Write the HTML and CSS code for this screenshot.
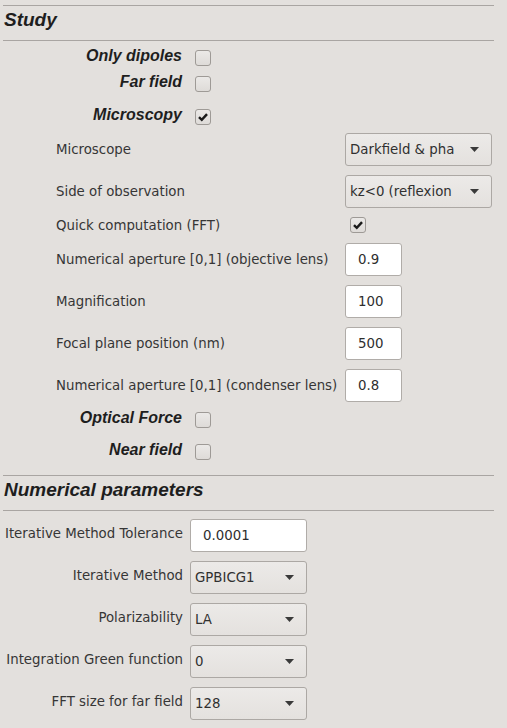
FILE: index.html
```html
<!DOCTYPE html>
<html>
<head>
<meta charset="utf-8">
<link rel="stylesheet" href="styles.css">
</head>
<body>
<div class="panel">
  <div class="sec-head"><h2>Study</h2></div>

  <div class="crow r1"><span class="clabel">Only dipoles</span><span class="cb"></span></div>
  <div class="crow r2"><span class="clabel">Far field</span><span class="cb"></span></div>
  <div class="crow r3"><span class="clabel">Microscopy</span><span class="cb checked"><svg viewBox="0 0 16 16"><path d="M3.4 8.2 L6.6 11.2 L12.6 4.8"/></svg></span></div>

  <div class="srow dd1"><span class="slabel">Microscope</span><div class="select wide"><span class="sel-text">Darkfield &amp; pha</span><svg class="arrow" viewBox="0 0 9 5"><polygon points="0,0 9,0 4.5,5"/></svg></div></div>
  <div class="srow dd2"><span class="slabel">Side of observation</span><div class="select wide"><span class="sel-text">kz&lt;0 (reflexion</span><svg class="arrow" viewBox="0 0 9 5"><polygon points="0,0 9,0 4.5,5"/></svg></div></div>
  <div class="srow quick"><span class="slabel">Quick computation (FFT)</span><span class="cb checked cb-sub"><svg viewBox="0 0 16 16"><path d="M3.4 8.2 L6.6 11.2 L12.6 4.8"/></svg></span></div>
  <div class="srow in1"><span class="slabel">Numerical aperture [0,1] (objective lens)</span><div class="entry small">0.9</div></div>
  <div class="srow inn"><span class="slabel">Magnification</span><div class="entry small">100</div></div>
  <div class="srow inn"><span class="slabel">Focal plane position (nm)</span><div class="entry small">500</div></div>
  <div class="srow inn"><span class="slabel">Numerical aperture [0,1] (condenser lens)</span><div class="entry small">0.8</div></div>

  <div class="crow r4"><span class="clabel">Optical Force</span><span class="cb"></span></div>
  <div class="crow r5"><span class="clabel">Near field</span><span class="cb"></span></div>

  <div class="sec-head num"><h2>Numerical parameters</h2></div>

  <div class="prow p1"><span class="plabel">Iterative Method Tolerance</span><div class="entry medium">0.0001</div></div>
  <div class="prow pn"><span class="plabel">Iterative Method</span><div class="select medium"><span class="sel-text">GPBICG1</span><svg class="arrow" viewBox="0 0 9 5"><polygon points="0,0 9,0 4.5,5"/></svg></div></div>
  <div class="prow pn"><span class="plabel">Polarizability</span><div class="select medium"><span class="sel-text">LA</span><svg class="arrow" viewBox="0 0 9 5"><polygon points="0,0 9,0 4.5,5"/></svg></div></div>
  <div class="prow pn"><span class="plabel">Integration Green function</span><div class="select medium"><span class="sel-text">0</span><svg class="arrow" viewBox="0 0 9 5"><polygon points="0,0 9,0 4.5,5"/></svg></div></div>
  <div class="prow pn"><span class="plabel">FFT size for far field</span><div class="select medium"><span class="sel-text">128</span><svg class="arrow" viewBox="0 0 9 5"><polygon points="0,0 9,0 4.5,5"/></svg></div></div>
</div>
</body>
</html>
```

FILE: styles.css
```css
html, body {
  margin: 0;
  padding: 0;
  background: #e3e0dd;
}
body {
  width: 507px;
  height: 728px;
  overflow: hidden;
  font-family: "DejaVu Sans", sans-serif;
  font-size: 13.333px;
  color: #3a3a3a;
}
.panel {
  display: flex;
  flex-direction: column;
}
.sec-head {
  margin: 5px 0 0 3px;
  width: 491px;
  height: 34px;
  border-top: 1px solid #a9a5a2;
  border-bottom: 1px solid #a9a5a2;
}
.sec-head h2 {
  margin: 0;
  padding-left: 1px;
  font-family: "Liberation Sans", Arial, sans-serif;
  font-weight: bold;
  font-style: italic;
  font-size: 19px;
  line-height: 28px;
  color: #1e1e1e;
}
.sec-head.num {
  margin-top: 15px;
}

/* checkbox rows */
.crow {
  display: flex;
  align-items: center;
  height: 16px;
}
.r1 { margin-top: 9px; }
.r2 { margin-top: 10px; }
.r3 { margin-top: 17px; }
.r4 { margin-top: 10px; }
.r5 { margin-top: 16px; }
.clabel {
  width: 182px;
  text-align: right;
  font-family: "Liberation Sans", Arial, sans-serif;
  font-weight: bold;
  font-style: italic;
  font-size: 16px;
  color: #1e1e1e;
  margin-bottom: 5px;
  white-space: nowrap;
}
.cb {
  box-sizing: border-box;
  width: 16px;
  height: 16px;
  margin-left: 13px;
  border: 1px solid #9e9a96;
  border-radius: 3px;
  background: linear-gradient(#ebe9e7, #dedbd8);
  display: flex;
}
.cb svg {
  width: 14px;
  height: 14px;
}
.cb svg path {
  fill: none;
  stroke: #1a1a1a;
  stroke-width: 2.8;
}
.cb-sub {
  margin-left: 5px;
}

/* sub rows (microscopy) */
.srow {
  display: flex;
  align-items: center;
  padding-left: 56px;
}
.dd1 { margin-top: 8px; }
.dd2 { margin-top: 9px; }
.quick { margin-top: 9px; height: 16px; }
.in1 { margin-top: 10px; }
.inn { margin-top: 9px; }
.slabel {
  width: 289px;
  white-space: nowrap;
  color: #363636;
}

.select {
  box-sizing: border-box;
  height: 33px;
  border: 1px solid #aca8a4;
  border-radius: 3px;
  background: linear-gradient(#eceae8, #e4e1de);
  display: flex;
  align-items: center;
  padding-left: 4px;
  padding-right: 12px;
  color: #303030;
}
.select.wide { width: 147px; }
.select.medium { width: 117px; }
.sel-text {
  flex: 1;
  white-space: nowrap;
  overflow: hidden;
}
.arrow {
  width: 9px;
  height: 5px;
  flex: none;
}
.arrow polygon {
  fill: #3a3a3a;
}

.entry {
  box-sizing: border-box;
  height: 33px;
  border: 1px solid #b0aca8;
  border-radius: 3px;
  background: #ffffff;
  display: flex;
  align-items: center;
  padding-left: 12px;
  color: #2e2e2e;
}
.entry.small { width: 57px; }
.entry.medium { width: 117px; }

/* numerical parameter rows */
.prow {
  display: flex;
  align-items: center;
}
.p1 { margin-top: 8px; }
.pn { margin-top: 9px; }
.plabel {
  width: 183px;
  margin-right: 7px;
  text-align: right;
  white-space: nowrap;
  color: #363636;
  margin-bottom: 5px;
}
```
